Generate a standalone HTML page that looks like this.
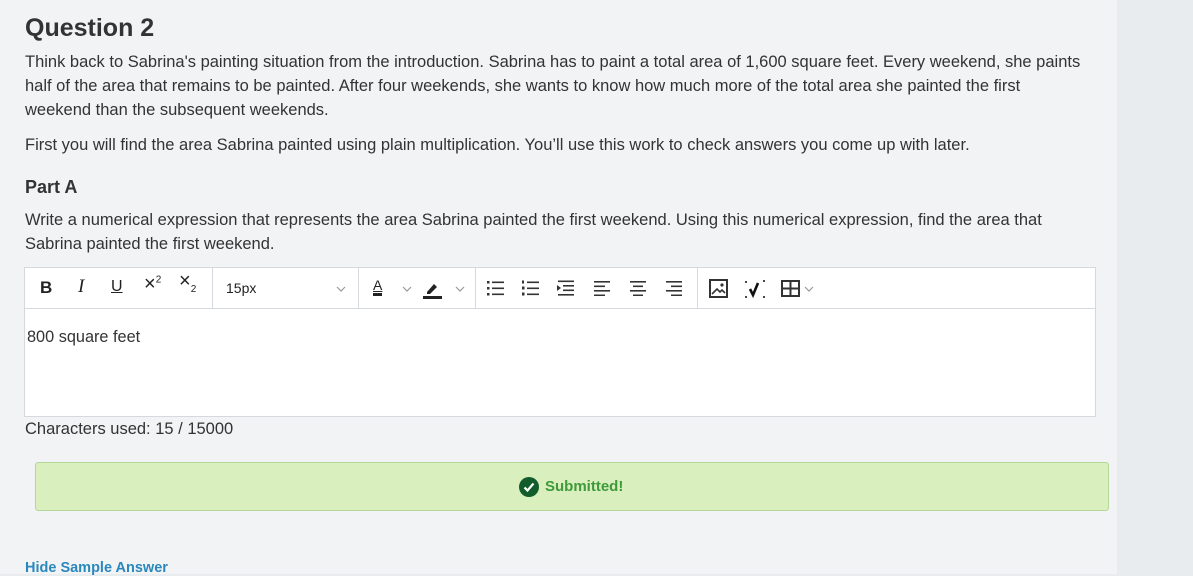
<!DOCTYPE html>
<html><head><style>
body{margin:0;width:1193px;height:574px;overflow:hidden;background:#e9ecef;font-family:"Liberation Sans",sans-serif;color:#333;}
.main{position:absolute;left:0;top:0;width:1117px;height:574px;background:#f1f3f5;}
.t{position:absolute;left:25px;white-space:nowrap;font-size:16.5px;line-height:24px;color:#333;}
h1{position:absolute;left:25px;top:14px;margin:0;font-size:25px;font-weight:bold;color:#333;}
h2{position:absolute;left:25px;top:177px;margin:0;font-size:18px;font-weight:bold;color:#333;}
.ed{position:absolute;left:24px;top:267px;width:1070px;height:148px;border:1px solid #d5d8dc;background:#fff;}
.tb{height:40px;border-bottom:1px solid #d5d8dc;position:relative;font-size:15px;}
.tb span{position:absolute;top:10px;color:#222;}
.tb svg{position:absolute;}
.sep{position:absolute;top:0;width:1px;height:40px;background:#d5d8dc;}
.sub{position:absolute;left:35px;top:462px;width:1072px;height:47px;border:1px solid #b5d79a;border-radius:3px;background:#d9efbe;}
</style></head><body>
<svg width="0" height="0" style="position:absolute"><defs>
<symbol id="ch" viewBox="0 0 10 6"><path d="M1 1l4 4 4-4" fill="none" stroke="#999" stroke-width="1.2"/></symbol>
</defs></svg>
<div class="main">
<h1>Question 2</h1>
<div class="t" style="top:50px">Think back to Sabrina's painting situation from the introduction. Sabrina has to paint a total area of 1,600 square feet. Every weekend, she paints</div>
<div class="t" style="top:74px">half of the area that remains to be painted. After four weekends, she wants to know how much more of the total area she painted the first</div>
<div class="t" style="top:98px">weekend than the subsequent weekends.</div>
<div class="t" style="top:133px">First you will find the area Sabrina painted using plain multiplication. You’ll use this work to check answers you come up with later.</div>
<h2>Part A</h2>
<div class="t" style="top:208px">Write a numerical expression that represents the area Sabrina painted the first weekend. Using this numerical expression, find the area that</div>
<div class="t" style="top:232px">Sabrina painted the first weekend.</div>
<div class="ed">
<div class="tb">
<span style="left:15px;font-weight:bold;font-size:17px">B</span>
<span style="left:53px;font-style:italic;font-family:'Liberation Serif';font-size:19px;top:8px">I</span>
<span style="left:86px;text-decoration:underline;font-size:16px">U</span>
<span style="left:119px;font-size:20px;top:5px">×<sup style="font-size:10px">2</sup></span>
<span style="left:154px;font-size:20px;top:2px">×<sub style="font-size:10px">2</sub></span>
<div class="sep" style="left:187px"></div>
<span style="left:201px;font-size:14px;top:12px">15px</span>
<svg style="left:311px;top:18px" width="10" height="6"><use href="#ch"/></svg>
<div class="sep" style="left:333px"></div>
<span style="left:348px;font-size:14px;top:9px;border-bottom:3px solid #222;line-height:16px;text-decoration:underline">A</span>
<svg style="left:377px;top:18px" width="10" height="6"><use href="#ch"/></svg>
<svg style="left:398px;top:11px" width="20" height="20" viewBox="0 0 20 20"><path d="M4 13l7-8 3 3-7 7H4z" fill="#222"/><rect x="0" y="17" width="19" height="3" fill="#222"/></svg>
<svg style="left:430px;top:18px" width="10" height="6"><use href="#ch"/></svg>
<div class="sep" style="left:450px"></div>
<svg style="left:462px;top:12px" width="18" height="16" viewBox="0 0 18 16"><g fill="#333"><rect x="0" y="1" width="2.5" height="2.5"/><rect x="0" y="7" width="2.5" height="2.5"/><rect x="0" y="13" width="2.5" height="2.5"/><rect x="5" y="1.5" width="12" height="1.6"/><rect x="5" y="7.5" width="12" height="1.6"/><rect x="5" y="13.5" width="12" height="1.6"/></g></svg>
<svg style="left:497px;top:12px" width="18" height="16" viewBox="0 0 18 16"><g fill="#333"><rect x="0" y="0.5" width="2" height="3"/><rect x="0" y="6.5" width="2.5" height="3"/><rect x="0" y="12.5" width="2.5" height="3"/><rect x="5" y="1.5" width="12" height="1.6"/><rect x="5" y="7.5" width="12" height="1.6"/><rect x="5" y="13.5" width="12" height="1.6"/></g></svg>
<svg style="left:532px;top:12px" width="18" height="16" viewBox="0 0 18 16"><g fill="#333"><path d="M0 5l4 3-4 3z"/><rect x="1" y="0.5" width="16" height="1.6"/><rect x="6" y="5" width="11" height="1.6"/><rect x="6" y="9.5" width="11" height="1.6"/><rect x="1" y="14" width="16" height="1.6"/></g></svg>
<svg style="left:568px;top:12px" width="18" height="16" viewBox="0 0 18 16"><g fill="#333"><rect x="1" y="1" width="16" height="1.6"/><rect x="1" y="5.5" width="11" height="1.6"/><rect x="1" y="10" width="16" height="1.6"/><rect x="1" y="14.5" width="11" height="1.6"/></g></svg>
<svg style="left:604px;top:12px" width="18" height="16" viewBox="0 0 18 16"><g fill="#333"><rect x="1" y="1" width="16" height="1.6"/><rect x="4" y="5.5" width="10" height="1.6"/><rect x="1" y="10" width="16" height="1.6"/><rect x="4" y="14.5" width="10" height="1.6"/></g></svg>
<svg style="left:640px;top:12px" width="18" height="16" viewBox="0 0 18 16"><g fill="#333"><rect x="1" y="1" width="16" height="1.6"/><rect x="6" y="5.5" width="11" height="1.6"/><rect x="1" y="10" width="16" height="1.6"/><rect x="6" y="14.5" width="11" height="1.6"/></g></svg>
<div class="sep" style="left:672px"></div>
<svg style="left:684px;top:11px" width="19" height="19" viewBox="0 0 19 19"><rect x="1" y="1" width="17" height="17" fill="none" stroke="#333" stroke-width="2"/><path d="M3 15l5-5 3 3 2-2 3 3" fill="none" stroke="#333" stroke-width="1.6"/><circle cx="13" cy="6" r="1.6" fill="#333"/></svg>
<svg style="left:718px;top:10px" width="24" height="22" viewBox="0 0 24 22"><path d="M7 11l3 6 5-12" fill="none" stroke="#111" stroke-width="2.6"/><circle cx="3" cy="4" r="1" fill="#111"/><circle cx="21" cy="3" r="1" fill="#111"/><circle cx="3" cy="19" r="1" fill="#111"/><circle cx="21" cy="19" r="1" fill="#111"/></svg>
<svg style="left:756px;top:12px" width="19" height="17" viewBox="0 0 19 17"><rect x="1" y="1" width="17" height="15" fill="none" stroke="#333" stroke-width="2"/><path d="M1 8.5h17M9.5 1v15" stroke="#333" stroke-width="2"/></svg>
<svg style="left:779px;top:18px" width="10" height="6"><use href="#ch"/></svg>
</div>
<div style="position:absolute;left:2px;top:60px;font-size:16.3px">800 square feet</div>
</div>
<div class="t" style="top:417px">Characters used: 15 / 15000</div>
<div class="sub">
<svg style="position:absolute;left:483px;top:14px" width="20" height="20" viewBox="0 0 20 20"><circle cx="10" cy="10" r="10" fill="#125c2c"/><path d="M5.5 10.5l3 3 6-7" fill="none" stroke="#fff" stroke-width="2.2"/></svg>
<div style="position:absolute;left:509px;top:15px;font-size:15px;font-weight:bold;color:#3e9a3a">Submitted!</div>
</div>
<div style="position:absolute;left:25px;top:560px;font-size:14.5px;font-weight:bold;color:#2a88bd">Hide Sample Answer</div>
</div>
</body></html>
